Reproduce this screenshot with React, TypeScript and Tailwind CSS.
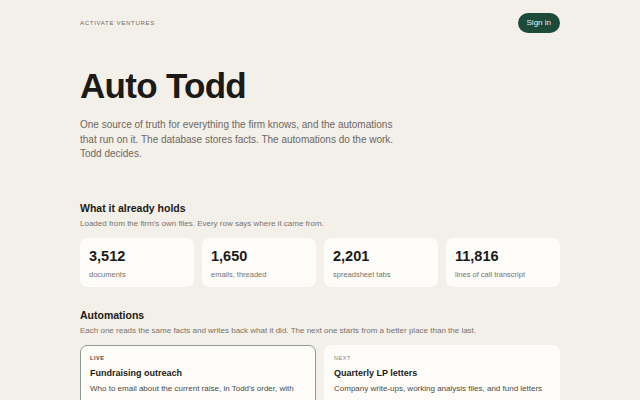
const stats = [
  { value: '3,512', label: 'documents' },
  { value: '1,650', label: 'emails, threaded' },
  { value: '2,201', label: 'spreadsheet tabs' },
  { value: '11,816', label: 'lines of call transcript' },
];

const automations = [
  {
    status: 'LIVE',
    title: 'Fundraising outreach',
    body: "Who to email about the current raise, in Todd's order, with the news each email should carry. Accept, edit, reject, or skip.",
    live: true,
  },
  {
    status: 'NEXT',
    title: 'Quarterly LP letters',
    body: 'Company write-ups, working analysis files, and fund letters drafted from the same evidence the outreach reads, with sources.',
    live: false,
  },
];

export default function App() {
  return (
    <div className="min-h-screen bg-[#f3efe9] font-['Liberation_Sans',Arial,sans-serif] text-[#1c1a17]">
      <div className="mx-auto w-[480px]">
        <header className="flex items-center justify-between pt-[13px]">
          <span className="text-[6px] tracking-[0.12em] text-[#6f6a63]">ACTIVATE VENTURES</span>
          <button className="h-[20px] rounded-full bg-[#1d4a39] px-[9px] text-[8px] text-[#e9efe9]">Sign in</button>
        </header>

        <section className="pt-[33px]">
          <h1 className="text-[35px] font-bold leading-[40px] tracking-[-0.02em]">Auto Todd</h1>
          <p className="mt-[12px] w-[320px] text-[10px] leading-[14.5px] text-[#6d6861]">
            One source of truth for everything the firm knows, and the automations that run on it. The database stores facts. The automations do the work. Todd decides.
          </p>
        </section>

        <section className="pt-[39px]">
          <h2 className="text-[10.5px] font-bold leading-[14px]">What it already holds</h2>
          <p className="mt-[4px] text-[8px] leading-[10px] text-[#7a746c]">
            Loaded from the firm's own files. Every row says where it came from.
          </p>
          <div className="mt-[9px] grid grid-cols-4 gap-[8px]">
            {stats.map((s) => (
              <div key={s.label} className="h-[49px] rounded-[7px] bg-[#fdfcf8] px-[9px] pt-[9px]">
                <div className="text-[14.5px] font-bold leading-[18px]">{s.value}</div>
                <div className="mt-[5px] text-[7.5px] leading-[10px] text-[#7a746c]">{s.label}</div>
              </div>
            ))}
          </div>
        </section>

        <section className="pt-[21px]">
          <h2 className="text-[10.5px] font-bold leading-[14px]">Automations</h2>
          <p className="mt-[4px] text-[8px] leading-[10px] text-[#7a746c]">
            Each one reads the same facts and writes back what it did. The next one starts from a better place than the last.
          </p>
          <div className="mt-[9px] grid grid-cols-2 gap-[8px]">
            {automations.map((a) => (
              <div
                key={a.title}
                className={`h-[80px] rounded-[7px] bg-[#fdfcf8] px-[9px] pt-[8px] ${a.live ? 'border border-[#8e9b91]' : 'border border-transparent'}`}
              >
                <div className={`text-[5.5px] tracking-[0.1em] ${a.live ? 'font-bold text-[#4a4640]' : 'text-[#8a847b]'}`}>{a.status}</div>
                <div className="mt-[5px] text-[9px] font-bold leading-[12px]">{a.title}</div>
                <p className="mt-[3px] text-[8px] leading-[14px] text-[#4e4a44]">{a.body}</p>
              </div>
            ))}
          </div>
        </section>
      </div>
    </div>
  );
}
